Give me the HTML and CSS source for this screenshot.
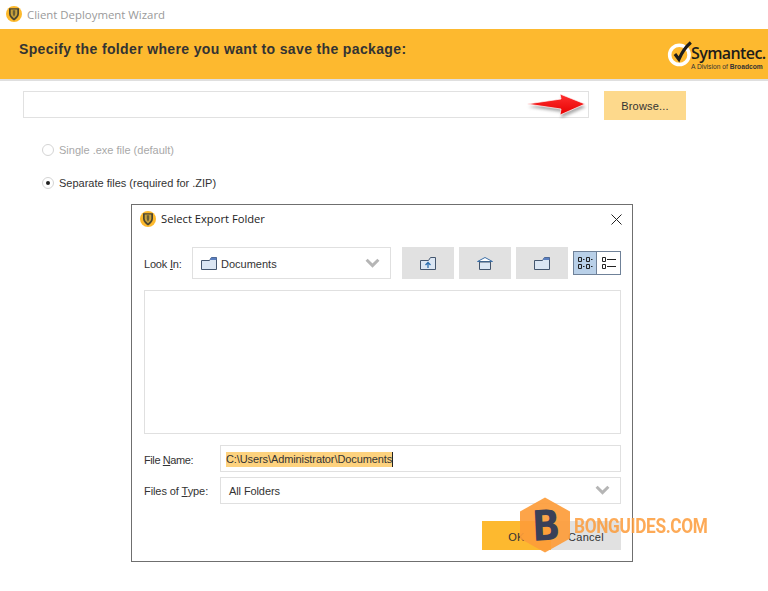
FILE: index.html
```html
<!DOCTYPE html>
<html lang="en">
<head>
<meta charset="utf-8">
<title>Client Deployment Wizard</title>
<link rel="stylesheet" href="styles.css">
</head>
<body>
<div class="page">
  <header class="titlebar">
    <svg class="shield" viewBox="0 0 16 16"><circle cx="8" cy="8" r="8" fill="#fdb92c"/><path d="M3 2.200h10v5.500c0 3-2.500 5-5 6.800-2.500-1.800-5-3.800-5-6.800z" fill="#4a4530"/><path d="M4.700 3.600h6.600v4c0 2-1.700 3.600-3.300 4.800-1.600-1.200-3.300-2.800-3.300-4.800z" fill="#c9a23c"/><path d="M6.800 4.200h2.400v3.500c0 1-.5 1.900-1.200 2.800-.7-.9-1.200-1.800-1.200-2.800z" fill="#6b5f36"/></svg>
    <span class="wizard-title">Client Deployment Wizard</span>
  </header>

  <section class="banner">
    <h1 class="banner-text">Specify the folder where you want to save the package:</h1>
    <div class="logo">
      <svg class="logo-mark" viewBox="0 0 34 34"><circle cx="14" cy="18" r="11" fill="none" stroke="#fff" stroke-width="4"/><path d="M9 17l4.500 6C17 15 21 9 27 4" fill="none" stroke="#1d1d1b" stroke-width="3.600"/></svg>
      <div class="logo-words">
        <span class="logo-name">Symantec.</span>
        <span class="logo-sub">A Division of <b>Broadcom</b></span>
      </div>
    </div>
  </section>

  <section class="path-row">
    <div class="path-input"></div>
    <button class="browse">Browse...</button>
    <svg class="arrow" viewBox="0 0 74 34">
      <defs>
        <linearGradient id="red" x1="0" y1="0" x2="0" y2="1"><stop offset="0" stop-color="#ff3030"/><stop offset="1" stop-color="#e60000"/></linearGradient>
        <filter id="soft" x="-20%" y="-40%" width="140%" height="180%"><feGaussianBlur stdDeviation="1.600"/></filter>
      </defs>
      <path d="M2 19l34-5-1-5 25 10-25 11 1-6z" fill="#666" opacity=".55" filter="url(#soft)" transform="translate(1 3)"/>
      <path d="M2 19l34-5-1-5 25 10-25 11 1-6z" fill="url(#red)" stroke="#fff" stroke-width=".7"/>
    </svg>
  </section>

  <section class="options">
    <label class="option muted"><span class="radio"></span>Single .exe file (default)</label>
    <label class="option"><span class="radio checked"></span>Separate files (required for .ZIP)</label>
  </section>

  <div class="dialog">
    <div class="dialog-title">
      <svg class="shield" viewBox="0 0 16 16"><circle cx="8" cy="8" r="8" fill="#fdb92c"/><path d="M3 2.200h10v5.500c0 3-2.500 5-5 6.800-2.500-1.800-5-3.800-5-6.800z" fill="#4a4530"/><path d="M4.700 3.600h6.600v4c0 2-1.700 3.600-3.300 4.800-1.600-1.200-3.300-2.800-3.300-4.800z" fill="#c9a23c"/><path d="M6.800 4.200h2.400v3.500c0 1-.5 1.900-1.200 2.800-.7-.9-1.200-1.800-1.200-2.800z" fill="#6b5f36"/></svg>
      <span class="dialog-name">Select Export Folder</span>
      <svg class="close" viewBox="0 0 11 11"><path d="M.5.500l10 10M10.500.500l-10 10" stroke="#222" stroke-width="1" fill="none"/></svg>
    </div>

    <div class="look-row">
      <span class="look-label">Look <u>I</u>n:</span>
      <div class="combo look-combo">
        <svg class="folder" viewBox="0 0 16 13"><path d="M.5 3.500h8l2-3h5v12H.5z" fill="#dbe6f3" stroke="#44566e"/><path d="M10 .5h5.500v2.500H9z" fill="#5a7fc0"/></svg>
        <span>Documents</span>
        <svg class="chevron" viewBox="0 0 14 9"><path d="M1.500 1.500L7 7l5.500-5.500" fill="none" stroke="#b5b5b5" stroke-width="2.800"/></svg>
      </div>
      <div class="tools">
        <button class="tool"><svg class="tool-icon" viewBox="0 0 16 13"><path d="M.5 3.500h8l2-3h5v12H.5z" fill="#dbe6f3" stroke="#44566e"/><path d="M8 11V6M5.500 8L8 5.500 10.500 8" fill="none" stroke="#2c6fb0" stroke-width="1.300"/></svg></button>
        <button class="tool"><svg class="tool-icon" viewBox="0 0 16 13"><path d="M8 .5L15.500 4.500H.5z" fill="#fff" stroke="#3c70a8"/><path d="M2.500 5h11v7.500h-11z" fill="#dbe6f3" stroke="#44566e"/></svg></button>
        <button class="tool"><svg class="tool-icon" viewBox="0 0 16 13"><path d="M.5 3.500h8l2-3h5v12H.5z" fill="#dbe6f3" stroke="#44566e"/><path d="M10 .5h5.500v2.500H9z" fill="#5a7fc0"/></svg></button>
      </div>
      <div class="view-toggle">
        <span class="view active"><svg viewBox="0 0 18 16"><path d="M2.500 2.500h3v4h-3zM10.500 2.500h3v4h-3zM2.500 9.500h3v4h-3zM10.500 9.500h3v4h-3z" fill="none" stroke="#222"/><path d="M7 4.500h1.500M15 4.500h1.500M7 11.500h1.500M15 11.500h1.500" stroke="#222"/></svg></span>
        <span class="view"><svg viewBox="0 0 18 16"><path d="M2.500 2.500h3v4h-3zM2.500 9.500h3v4h-3z" fill="none" stroke="#222"/><path d="M7 4.500h9M7 11.500h9" stroke="#222"/></svg></span>
      </div>
    </div>

    <div class="file-list"></div>

    <div class="field-row name-row">
      <span class="field-label">File <u>N</u>ame:</span>
      <div class="combo field-input"><span class="selected">C:\Users\Administrator\Documents</span><span class="caret"></span></div>
    </div>
    <div class="field-row">
      <span class="field-label">Files of <u>T</u>ype:</span>
      <div class="combo field-input type-input">
        <span>All Folders</span>
        <svg class="chevron" viewBox="0 0 14 9"><path d="M1.500 1.500L7 7l5.500-5.500" fill="none" stroke="#b5b5b5" stroke-width="2.800"/></svg>
      </div>
    </div>

    <div class="actions">
      <button class="action ok">OK</button>
      <button class="action cancel">Cancel</button>
    </div>
  </div>

  <div class="watermark">
    <svg class="hex" viewBox="0 0 52 56"><path d="M26 .5L51 14.500v27L26 55.500 1 41.500v-27z" fill="#fd9c3a" fill-opacity=".92"/></svg>
    <span class="hex-letter">B</span>
    <span class="wm-text">BONGUIDES.COM</span>
  </div>
</div>
</body>
</html>
```
FILE: styles.css
```css
* { box-sizing: border-box; }
html, body { margin: 0; padding: 0; background: #fff; }
body { font-family: "Liberation Sans", Arial, sans-serif; color: #333; overflow: hidden; }
.page { position: relative; width: 768px; height: 591px; overflow: hidden; }

.titlebar { height: 29px; display: flex; align-items: center; gap: 5px; padding: 0 0 1px 6px; }
.shield { width: 16px; height: 16px; flex: none; }
.wizard-title { font-family: "Open Sans", sans-serif; font-size: 11.400px; color: #9a9a9a; }

.banner { height: 52px; background: #fdb92f; border-bottom: 2px solid #dfdfdf; display: flex; align-items: center; justify-content: space-between; padding: 0 0 10px 19px; }
.banner-text { margin: 0; font-size: 14px; font-weight: 700; letter-spacing: .36px; color: #333; }
.logo { display: flex; align-items: flex-start; margin: 14px 0 0; width: 101px; }
.logo-mark { width: 30px; height: 30px; margin-top: -2px; margin-right: -6px; flex: none; }
.logo-words { display: flex; flex-direction: column; margin-top: 3px; white-space: nowrap; }
.logo-name { font-family: "Open Sans", sans-serif; font-weight: 600; font-size: 16px; line-height: 18px; letter-spacing: -.6px; color: #1d1d1b; }
.logo-sub { font-size: 6.700px; line-height: 9px; color: #333; }

.path-row { position: relative; display: flex; align-items: flex-start; padding: 10px 0 0 23px; height: 60px; }
.path-input { width: 566px; height: 27px; border: 1px solid #e1e1e1; }
.browse { width: 82px; height: 29px; margin-left: 15px; border: 0; background: #fdd98c; font: 11px "Liberation Sans", sans-serif; letter-spacing: .2px; color: #333; padding: 0; }
.arrow { position: absolute; left: 525px; top: 4px; width: 74px; height: 34px; }

.options { display: flex; flex-direction: column; gap: 19px; padding: 0 0 0 42px; margin-top: 2px; }
.option { display: flex; align-items: center; gap: 5px; font-size: 11px; height: 14px; color: #333; }
.option.muted { color: #a8a8a8; }
.radio { width: 12px; height: 12px; border-radius: 50%; border: 1.500px solid #d4d4d4; background: #fff; display: flex; align-items: center; justify-content: center; }
.radio.checked::after { content: ""; width: 4px; height: 4px; border-radius: 50%; background: #222; }

.dialog { position: absolute; left: 131px; top: 204px; width: 502px; height: 358px; border: 1px solid #6f6f6f; background: #fff; padding: 0 11px 0 12px; display: flex; flex-direction: column; }
.dialog-title { display: flex; align-items: center; height: 29px; margin-top: -1px; position: relative; margin-left: -4px; }
.dialog-name { font-family: "Open Sans", sans-serif; font-size: 11.200px; color: #222; margin-left: 5px; }
.close { width: 11px; height: 11px; position: absolute; right: -1px; top: 10px; }

.look-row { display: flex; align-items: center; margin-top: 14px; height: 32px; }
.look-label { width: 48px; padding-top: 2px; font-size: 11px; letter-spacing: -.2px; color: #333; }
.combo { border: 1px solid #e0e0e0; font-size: 11px; color: #333; }
.look-combo { width: 199px; height: 32px; display: flex; align-items: center; padding: 1px 10px 0 8px; }
.folder { width: 16px; height: 13px; margin-right: 4px; }
.chevron { width: 15px; height: 10px; margin-left: auto; margin-bottom: 2px; }
.tools { display: flex; gap: 5px; margin-left: 11px; }
.tool { width: 52px; height: 32px; background: #e1e1e1; border: 0; padding: 0; display: flex; align-items: center; justify-content: center; }
.tool-icon { width: 16px; height: 13px; }
.view-toggle { display: flex; margin-left: 5px; }
.view { width: 24px; height: 24px; border: 1px solid #6f8198; display: flex; align-items: center; justify-content: center; background: #fff; }
.view + .view { border-left: 0; }
.view.active { background: #b9d0e8; }
.view svg { width: 18px; height: 16px; }

.file-list { height: 144px; border: 1px solid #e0e0e0; margin-top: 11px; }

.field-row { display: flex; align-items: center; height: 27px; margin-top: 5px; }
.name-row { margin-top: 11px; }
.field-label { width: 76px; font-size: 11px; letter-spacing: -.08px; color: #333; }
.name-row .field-label { padding-top: 2px; letter-spacing: -.4px; }
.field-input { width: 401px; height: 27px; display: flex; align-items: center; padding: 1px 0 0 5px; }
.selected { background: #fdd27e; line-height: 15px; color: #333; letter-spacing: -.1px; }
.caret { width: 1px; height: 15px; background: #222; }
.type-input { padding: 0 10px 0 8px; letter-spacing: -.1px; }

.actions { display: flex; justify-content: flex-end; margin-top: 17px; }
.action { height: 29px; border: 0; padding: 2px 0 0; font: 11px "Liberation Sans", sans-serif; letter-spacing: .3px; color: #333; }
.ok { width: 69px; background: #fdb92f; }
.cancel { width: 70px; background: #e1e1e1; }

.watermark { position: absolute; left: 519px; top: 497px; width: 192px; height: 58px; }
.hex { position: absolute; left: 0; top: 0; width: 52px; height: 56px; }
.hex-letter { position: absolute; left: 13px; top: 5px; font: 700 42px/50px "DejaVu Sans", sans-serif; color: #3a4058; transform: scaleX(.88) rotate(-3deg); transform-origin: left; }
.wm-text { position: absolute; left: 55px; top: 17px; font: 700 21px/24px "Roboto", sans-serif; letter-spacing: -.4px; color: #fd9c3a; opacity: .85; white-space: nowrap; transform: scaleX(.82); transform-origin: left; }
```
